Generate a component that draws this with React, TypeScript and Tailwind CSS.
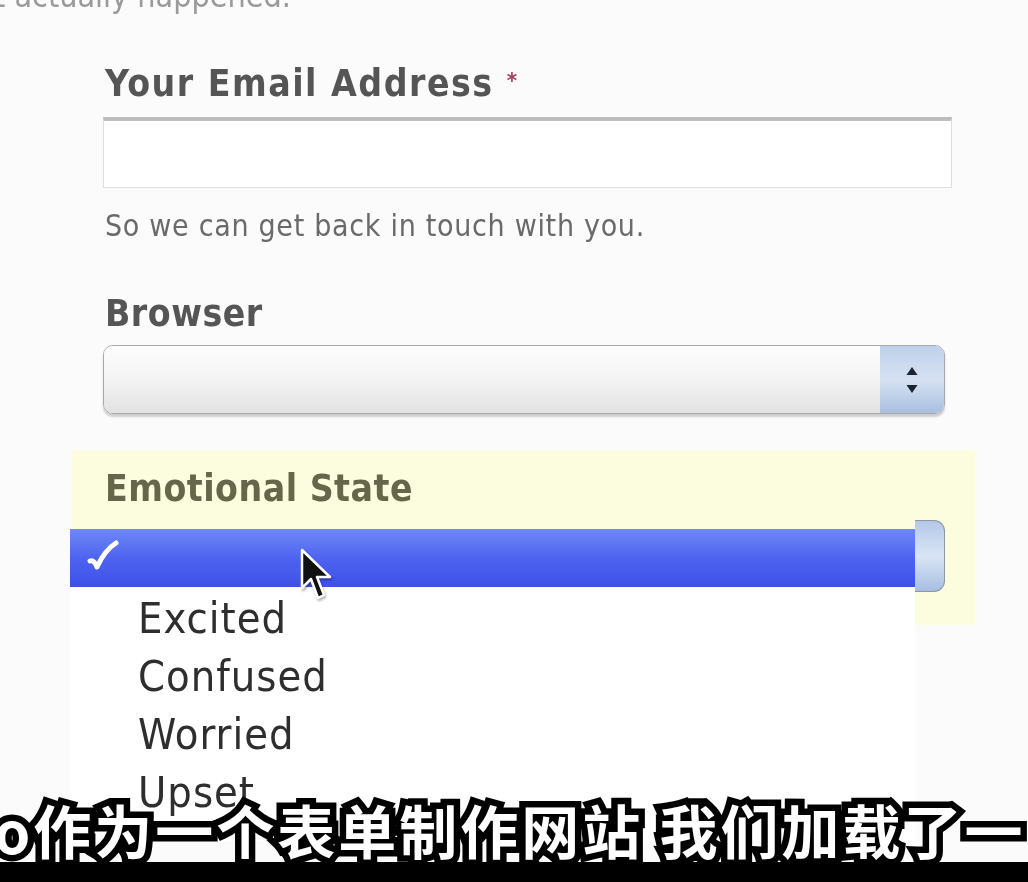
import React from 'react';

const options = ['Excited', 'Confused', 'Worried', 'Upset'];

function Stepper() {
  return (
    <svg width="18" height="34" viewBox="0 0 18 34" className="text-[#1c2333]">
      <path d="M9 4 L14.5 12 L3.5 12 Z" fill="currentColor" />
      <path d="M3.5 22 L14.5 22 L9 30 Z" fill="currentColor" />
    </svg>
  );
}

function Check() {
  return (
    <svg width="32" height="36" viewBox="0 0 32 36">
      <path
        d="M3 21 C6 20 8 22 10 27 C15 16 21 8 29 3"
        fill="none"
        stroke="#fff"
        strokeWidth="5"
        strokeLinecap="round"
        strokeLinejoin="round"
      />
    </svg>
  );
}

function Cursor() {
  return (
    <svg width="34" height="56" viewBox="0 0 34 56" className="drop-shadow-[1px_2px_1px_rgba(0,0,0,0.3)]">
      <path
        d="M3 2 L3 40 L12 31 L19 50 L25 47 L18 29 L31 29 Z"
        fill="#111"
        stroke="#fff"
        strokeWidth="2.5"
        strokeLinejoin="round"
      />
    </svg>
  );
}

export default function App() {
  return (
    <div className="relative w-[1028px] h-[882px] overflow-hidden bg-[#fbfbfb] font-['DejaVu_Sans_Condensed','DejaVu_Sans',sans-serif]">
      {/* bit of the paragraph above, cut off by the frame */}
      <div className="h-[14px] overflow-hidden">
        <p className="-mt-[22px] -ml-[6px] text-[32px] leading-[36px] text-[#9a9a9a] blur-[0.6px]">t actually happened.</p>
      </div>

      <div className="pl-[103px] w-[952px] blur-[0.5px]">
        {/* email */}
        <div className="mt-[48px] pl-[2px] text-[37px] leading-[44px] font-bold tracking-[1.5px] text-[#555]">
          Your Email Address <span className="relative -top-[8px] text-[22px] text-[#a3415f]">*</span>
        </div>
        <div className="mt-[6px] h-[71px] w-[849px] border border-[#dedede] border-t-[4px] border-t-[#bdbdbd] bg-white" />
        <p className="mt-[20px] pl-[2px] text-[30px] leading-[36px] tracking-[0.7px] text-[#6a6a6a]">
          So we can get back in touch with you.
        </p>

        {/* browser */}
        <div className="mt-[48px] pl-[2px] text-[37px] leading-[44px] font-bold tracking-[0.5px] text-[#555]">Browser</div>
        <div className="mt-[9px] flex h-[69px] w-[842px] overflow-hidden rounded-[10px] border border-[#a9a9a9] shadow-[0_3px_2px_rgba(0,0,0,0.18)]">
          <div className="flex-1 bg-gradient-to-b from-[#fdfdfd] via-[#f4f4f4] to-[#e2e2e2]" />
          <div className="flex w-[64px] items-center justify-center bg-gradient-to-b from-[#bfd0ea] via-[#d6e2f3] to-[#a9bfe0]">
            <Stepper />
          </div>
        </div>
      </div>

      {/* emotional state, highlighted */}
      <div className="mt-[36px] ml-[72px] h-[175px] w-[903px] bg-[#fcfcde] pt-[17px] pl-[33px] blur-[0.5px]">
        <div className="text-[37px] leading-[44px] font-bold tracking-[0.5px] text-[#66664a]">Emotional State</div>
        <div className="mt-[9px] flex h-[72px] w-[840px] justify-end">
          <div className="h-full w-[30px] rounded-r-[11px] border border-l-0 border-[#8d97a6] bg-gradient-to-b from-[#b4c8e6] via-[#d9e5f5] to-[#a7bee2]" />
        </div>
      </div>

      {/* open popup menu */}
      <div className="absolute left-[70px] top-[529px] w-[845px] bg-white blur-[0.5px]">
        <div className="flex h-[58px] items-center bg-gradient-to-b from-[#7088f5] via-[#4f63f0] to-[#3d50e8] pl-[17px]">
          <Check />
        </div>
        <ul className="pt-[2px] pl-[68px] pb-[20px]">
          {options.map((o) => (
            <li key={o} className="text-[43px] leading-[58px] tracking-[1px] text-[#2e2e2e]">
              {o}
            </li>
          ))}
        </ul>
      </div>

      <div className="absolute left-[299px] top-[548px]">
        <Cursor />
      </div>

      {/* burned-in subtitle */}
      <div className="absolute left-0 top-[790px] w-[1028px]">
        <p className="-ml-[6px] whitespace-nowrap text-[58px] leading-[78px] font-bold tracking-[3px] text-white [paint-order:stroke_fill] [-webkit-text-stroke:13px_#000] font-['Noto_Sans_CJK_SC',sans-serif]">
          o作为一个表单制作网站 我们加载了一
        </p>
      </div>
      <div className="absolute left-0 top-[862px] h-[20px] w-[1028px] bg-black" />
    </div>
  );
}
